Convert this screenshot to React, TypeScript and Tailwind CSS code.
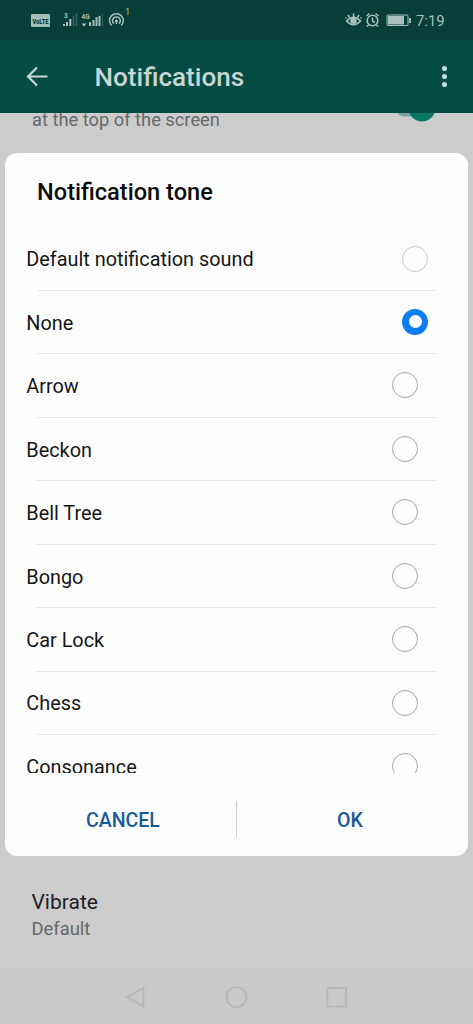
import React from 'react';

const tones = ['Default notification sound', 'None', 'Arrow', 'Beckon', 'Bell Tree', 'Bongo', 'Car Lock', 'Chess', 'Consonance'];

function StatusBar() {
  return (
    <div className="flex h-10 shrink-0 items-center justify-between bg-[#073f38] pl-[30px] pr-[29px] text-[#a9c1bd]">
      <svg width="102" height="40" viewBox="30 0 102 40" fill="none" stroke="currentColor">
        <rect x="31" y="14" width="19" height="13" rx="1" fill="#a3bcb8" stroke="none" />
        <text x="32.500" y="23.500" fontSize="8" fontWeight="900" fontFamily="Roboto" fill="#0b4039" stroke="none" textLength="16" lengthAdjust="spacingAndGlyphs">VoLTE</text>
        <g strokeWidth="2">
          <path d="M64 26v-2M67 26v-4M70.300 26v-7" />
          <path d="M73.500 26V16M76.500 26V14" strokeWidth="1.500" opacity=".3" />
          <path d="M90 26v-4M93.500 26v-6M96.500 26v-9M99.500 26V16" />
          <path d="M102.500 26V14" strokeWidth="1" opacity=".3" />
        </g>
        <text x="64" y="18" fontSize="6.500" fontWeight="700" fontFamily="Roboto" fill="currentColor" stroke="none">3</text>
        <text x="81.500" y="19" fontSize="7.500" fontWeight="700" fontFamily="Roboto" fill="currentColor" stroke="none" textLength="8" lengthAdjust="spacingAndGlyphs">4G</text>
        <path d="M81.500 23.500h5l-2.500 3z" fill="currentColor" stroke="none" />
        <g strokeWidth="1.500">
          <path d="M111.500 25.500a6.900 6.900 0 1 1 9.800 0" />
          <path d="M113.700 23.600a3.900 3.900 0 1 1 5.400 0" />
        </g>
        <circle cx="116.400" cy="21" r="1.500" fill="currentColor" stroke="none" />
        <path d="M116.400 21v3" strokeWidth="1.300" />
        <text x="125.300" y="14.500" fontSize="8.500" fontFamily="Roboto" fill="currentColor" stroke="none">1</text>
      </svg>
      <div className="flex items-center">
        <svg width="70" height="40" viewBox="344 0 70 40" fill="none" stroke="currentColor" strokeWidth="1.500">
          <path d="M346.500 21Q353.500 13.500 360.500 21Q353.500 28.500 346.500 21Z" />
          <circle cx="353.500" cy="20.800" r="2.500" fill="currentColor" />
          <path d="M353.500 17v-3.500M349.500 17.500l-1.500-2.500M357.500 17.500l1.500-2.500M346.500 18.500l-1-1M360.500 18.500l1-1" />
          <circle cx="372.500" cy="20.500" r="5.300" />
          <path d="M372.500 17.500V21l2.500 1.500M366.500 16l3-2.500M378.500 16l-3-2.500M368.500 25l-1.500 1.500M376.500 25l1.500 1.500" />
          <rect x="387" y="15" width="21" height="10.500" rx="1" strokeWidth="1" />
          <rect x="388" y="16" width="16" height="8.500" fill="currentColor" stroke="none" />
          <path d="M410 18v5" strokeWidth="1.800" />
        </svg>
        <span className="ml-[2px] w-[28px] whitespace-nowrap pt-[2px] text-[14.800px]">7:19</span>
      </div>
    </div>
  );
}

function AppBar() {
  return (
    <header className="flex h-[73px] shrink-0 items-center bg-[#074c43] pl-[26px] pr-[26.500px] text-[#c6d6d4]">
      <svg width="22" height="22" viewBox="0 0 22 22" fill="none" stroke="currentColor" strokeWidth="2.200">
        <path d="M21.500 10.500H2M11 1.500L2 10.500l9 9" />
      </svg>
      <h1 className="ml-[46.500px] flex-1 whitespace-nowrap pt-px text-[26.100px] font-medium leading-8">Notifications</h1>
      <div className="flex flex-col gap-[3px]">
        <i className="size-[5px] rounded-full bg-[#c6e0dc]" />
        <i className="size-[5px] rounded-full bg-[#c6e0dc]" />
        <i className="size-[5px] rounded-full bg-[#c6e0dc]" />
      </div>
    </header>
  );
}

function ToneDialog() {
  return (
    <section className="absolute left-[5px] top-[153px] flex h-[703px] w-[463px] flex-col rounded-xl bg-[#fefefe] text-[#161616]">
      <h2 className="h-[74px] shrink-0 pl-8 pt-[23px] text-[23.600px] font-medium leading-8 text-[#0c0c0c]">Notification tone</h2>
      <ul className="h-[545.500px] shrink-0 overflow-hidden">
        {tones.map((tone, i) => (
          <li key={tone} className="h-[63.450px]">
            <div className={`flex h-[63px] items-center justify-between pl-[21.300px] ${i < 2 ? 'pr-[40px]' : 'pr-[50px]'}`}>
              <span className="whitespace-nowrap pt-[3.500px] text-[19.850px]">{tone}</span>
              <span className={i === 1 ? 'size-[26px] rounded-full bg-[#0c7df2] p-[6.500px]' : i === 0 ? 'size-[26px] rounded-full border border-[#c8c8c8]' : 'size-[26px] rounded-full border border-[#a6a6a6]'}>
                {i === 1 && <i className="block size-[13px] rounded-full bg-white" />}
              </span>
            </div>
            <div className="ml-8 mr-8 h-px bg-[#e6e6e6]" />
          </li>
        ))}
      </ul>
      <div className="flex h-[83px] items-center">
        <button className="w-[231px] pl-[5px] pt-[13px] text-center text-[19.500px] font-medium text-[#175a9c]">CANCEL</button>
        <i className="mt-[10px] h-[36px] w-px bg-[#d0d0d0]" />
        <button className="w-[231px] pr-[5px] pt-[13px] text-center text-[19.500px] font-medium text-[#175a9c]">OK</button>
      </div>
    </section>
  );
}

export default function App() {
  return (
    <div className="relative flex h-[1024px] w-[473px] flex-col overflow-hidden bg-[#cccccc] font-[Roboto,sans-serif]">
      <StatusBar />
      <AppBar />
      <main className="flex h-[855px] flex-col justify-between overflow-hidden">
        <div className="flex h-[20px] justify-between pl-8 pr-[38px]">
          <p className="-mt-[6px] whitespace-nowrap text-[18.300px] leading-[26px] text-[#66696b]">at the top of the screen</p>
          <svg width="40" height="10" viewBox="0 0 40 10">
            <path d="M3 0h20v3.500H9Q4 3 3 0z" fill="#79a39e" />
            <circle cx="27" cy="-5" r="13.500" fill="#087565" />
          </svg>
        </div>
        <div className="pb-[26px] pl-[31.500px]">
          <p className="text-[21px] leading-7 text-[#1d2027]">Vibrate</p>
          <p className="text-[18.400px] leading-[26px] text-[#66686a]">Default</p>
        </div>
      </main>
      <nav className="flex h-14 items-center bg-[#c9c9c9] pl-[125px] pt-[2px]">
        <svg width="224" height="24" viewBox="125 985 224 24" fill="none" stroke="#b7b7b7" strokeWidth="1.700">
          <path d="M143.500 988v18.500L127 997z" />
          <circle cx="236.500" cy="997" r="10" />
          <rect x="327.500" y="988" width="18.500" height="18.500" />
        </svg>
      </nav>
      <ToneDialog />
    </div>
  );
}
